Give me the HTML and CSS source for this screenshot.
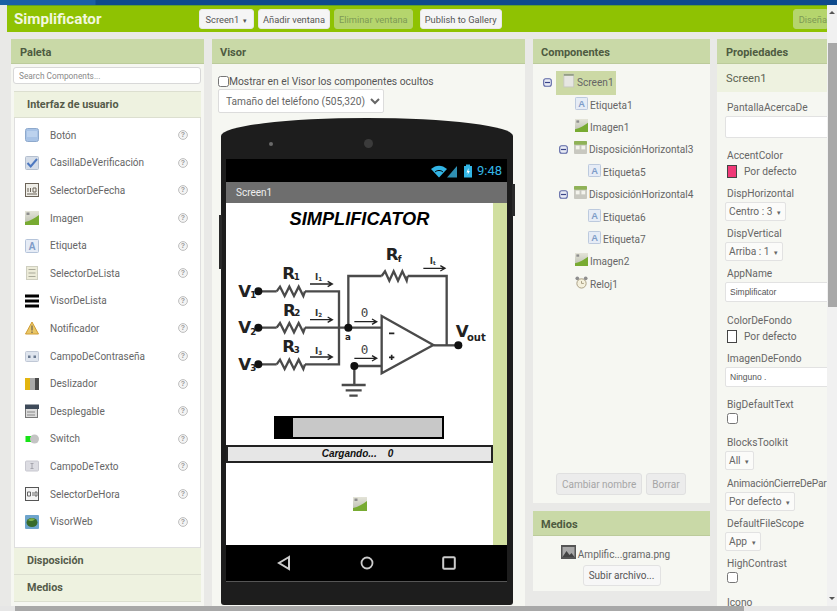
FILE: index.html
```html
<!DOCTYPE html>
<html lang="es">
<head>
    <meta charset="UTF-8">
    <title>Simplificator</title>
    <link rel="stylesheet" href="styles.css">
</head>
<body>
    <svg class="icon-defs" width="0" height="0">
        <defs>
            <linearGradient id="grass" x1="0" y1="0" x2="0" y2="1">
                <stop offset="0" stop-color="#e4e4d8"/>
                <stop offset="1" stop-color="#b9bdb0"/>
            </linearGradient>
            <symbol id="i-boton" viewBox="0 0 14 14"><rect x="0.5" y="0.5" width="13" height="13" rx="2" fill="#a8c3e6" stroke="#8ea9cc"/><rect x="2" y="3" width="10" height="6" fill="#bcd2ee"/></symbol>
            <symbol id="i-check" viewBox="0 0 14 14"><rect x="0.5" y="0.5" width="13" height="13" rx="1" fill="#d5dde8" stroke="#b4bfcf"/><path d="M2.5 7l3.2 3.5L12 3" fill="none" stroke="#4d78c0" stroke-width="2"/></symbol>
            <symbol id="i-fecha" viewBox="0 0 14 14"><rect x="0.5" y="0.5" width="13" height="13" fill="#efeee8" stroke="#6b6357"/><path d="M3 5v4M5.5 5v4M8 5h3v4H8zM2 11h10" fill="none" stroke="#6b6357"/></symbol>
            <symbol id="i-imagen" viewBox="0 0 14 14"><rect width="14" height="14" fill="url(#grass)"/><rect x="1.5" y="1.5" width="3" height="2.5" fill="#8d8d8d"/><path d="M0 11C5 10 10 7 14 4v10H0z" fill="#78ab32"/></symbol>
            <symbol id="i-etiqueta" viewBox="0 0 14 14"><rect x="0.5" y="0.5" width="13" height="13" rx="1" fill="#e6ecf6" stroke="#b5c4da"/><text x="7" y="11" text-anchor="middle" class="icon-letter">A</text></symbol>
            <symbol id="i-selector" viewBox="0 0 14 14"><rect x="1.5" y="0.5" width="11" height="13" fill="#ecebd8" stroke="#cfcfc0"/><path d="M3.500 3.500h7M3.500 7h7M3.500 10.500h7" stroke="#a9a999"/></symbol>
            <symbol id="i-lista" viewBox="0 0 14 14"><rect y="0.5" width="14" height="3" fill="#000"/><rect y="5.5" width="14" height="3" fill="#000"/><rect y="10.5" width="14" height="3" fill="#000"/></symbol>
            <symbol id="i-notif" viewBox="0 0 14 14"><path d="M7 1l6.500 12H.5z" fill="#e9c767" stroke="#d09c34"/><path d="M7 4.500v5M7 10.500v1.500" stroke="#8a7a55" stroke-width="1.600"/></symbol>
            <symbol id="i-pass" viewBox="0 0 14 14"><rect x="0.5" y="2.5" width="13" height="10" rx="1" fill="#dfe5ee" stroke="#c0c8d6"/><rect x="3" y="6.5" width="2.5" height="2.5" fill="#6b7a90"/><rect x="8.5" y="6.5" width="2.5" height="2.5" fill="#6b7a90"/></symbol>
            <symbol id="i-desliz" viewBox="0 0 14 14"><rect y="1" width="5" height="12" fill="#e3b510"/><rect x="5" y="1" width="5" height="12" fill="#aaa"/><rect x="10" y="1" width="4" height="12" fill="#4b4b4b"/></symbol>
            <symbol id="i-despl" viewBox="0 0 14 14"><rect x="0.5" y="4" width="12" height="9.5" fill="#dcdcdc" stroke="#777"/><rect y="0.5" width="14" height="4.5" fill="#3e4a59"/><path d="M2 8h8M2 11h8" stroke="#888"/></symbol>
            <symbol id="i-switch" viewBox="0 0 14 14"><rect x="0.5" y="4" width="8" height="6" fill="#17e317"/><circle cx="9.5" cy="7" r="4.5" fill="#c4c4c4"/></symbol>
            <symbol id="i-campo" viewBox="0 0 14 14"><rect x="0.5" y="2" width="13" height="10" rx="1" fill="#dcdce2" stroke="#c8c8d0"/><path d="M5.500 4.500h3M7 4.500v5M5.500 9.500h3" stroke="#a4a4ac"/></symbol>
            <symbol id="i-hora" viewBox="0 0 14 14"><rect x="0.5" y="0.5" width="13" height="13" fill="#f4f4f4" stroke="#555"/><path d="M2.500 5h3v4h-3zM8 5v4M10 5h2v4h-2z" fill="none" stroke="#666"/></symbol>
            <symbol id="i-web" viewBox="0 0 14 14"><rect width="14" height="14" rx="1" fill="#6ea4cc"/><ellipse cx="7" cy="7.5" rx="5.5" ry="4.5" fill="#386b2a"/><path d="M3 5c2-2 5-2 7-1-1 2-5 3-7 1z" fill="#7fb04a"/></symbol>
            <symbol id="i-layout" viewBox="0 0 14 14"><rect width="14" height="14" rx="1" fill="#c8c8c0"/><rect y="0" width="14" height="4" rx="1" fill="#8fb257"/><rect x="2" y="5" width="4" height="4" fill="#f3f3ec"/><rect x="8" y="5" width="4" height="4" fill="#f3f3ec"/></symbol>
            <symbol id="i-screen" viewBox="0 0 14 16"><rect x="1" y="0.5" width="11.5" height="15" fill="#e6e6e2" stroke="#c7c7c0"/><rect x="1" y="0.5" width="11.5" height="2" fill="#8f9a80"/></symbol>
            <symbol id="i-reloj" viewBox="0 0 14 14"><circle cx="7" cy="8" r="5" fill="#f4f0dc" stroke="#a59a7e"/><path d="M7 5.500V8h2.500" fill="none" stroke="#a59a7e"/><circle cx="2.5" cy="2.5" r="2" fill="#8e8e8e"/><circle cx="11.5" cy="2.5" r="2" fill="#8e8e8e"/></symbol>
            <symbol id="i-minus" viewBox="0 0 9 9"><rect x="0.7" y="0.7" width="7.6" height="7.6" rx="2" fill="#e8ebf5" stroke="#5a64a4" stroke-width="1.1"/><path d="M2 4.500h5" stroke="#3a4488" stroke-width="1.200"/></symbol>
            <symbol id="i-help" viewBox="0 0 10 10"><circle cx="5" cy="5" r="4.4" fill="#f4f4f4" stroke="#bdbdbd"/><text x="5" y="7.4" text-anchor="middle" class="icon-help">?</text></symbol>
        </defs>
    </svg>

    <div class="top-strip"></div>

    <div class="window">
        <div class="page">
            <header class="toolbar">
                <div class="app-title">Simplificator</div>
                <button class="btn btn-screen">Screen1 <span class="caret">▾</span></button>
                <button class="btn">Añadir ventana</button>
                <button class="btn btn-off">Eliminar ventana</button>
                <button class="btn btn-publish">Publish to Gallery</button>
                <button class="btn btn-off btn-design">Diseña</button>
            </header>

            <main class="workspace">
                <section class="panel palette">
                    <h2 class="panel-head">Paleta</h2>
                    <div class="search-wrap">
                        <input class="search" type="text" placeholder="Search Components...">
                    </div>
                    <h3 class="group-head group-first">Interfaz de usuario</h3>
                    <ul class="palette-list">
                        <li><svg class="pal-icon"><use href="#i-boton"/></svg><span>Botón</span><svg class="help"><use href="#i-help"/></svg></li>
                        <li><svg class="pal-icon"><use href="#i-check"/></svg><span>CasillaDeVerificación</span><svg class="help"><use href="#i-help"/></svg></li>
                        <li><svg class="pal-icon"><use href="#i-fecha"/></svg><span>SelectorDeFecha</span><svg class="help"><use href="#i-help"/></svg></li>
                        <li><svg class="pal-icon"><use href="#i-imagen"/></svg><span>Imagen</span><svg class="help"><use href="#i-help"/></svg></li>
                        <li><svg class="pal-icon"><use href="#i-etiqueta"/></svg><span>Etiqueta</span><svg class="help"><use href="#i-help"/></svg></li>
                        <li><svg class="pal-icon"><use href="#i-selector"/></svg><span>SelectorDeLista</span><svg class="help"><use href="#i-help"/></svg></li>
                        <li><svg class="pal-icon"><use href="#i-lista"/></svg><span>VisorDeLista</span><svg class="help"><use href="#i-help"/></svg></li>
                        <li><svg class="pal-icon"><use href="#i-notif"/></svg><span>Notificador</span><svg class="help"><use href="#i-help"/></svg></li>
                        <li><svg class="pal-icon"><use href="#i-pass"/></svg><span>CampoDeContraseña</span><svg class="help"><use href="#i-help"/></svg></li>
                        <li><svg class="pal-icon"><use href="#i-desliz"/></svg><span>Deslizador</span><svg class="help"><use href="#i-help"/></svg></li>
                        <li><svg class="pal-icon"><use href="#i-despl"/></svg><span>Desplegable</span><svg class="help"><use href="#i-help"/></svg></li>
                        <li><svg class="pal-icon"><use href="#i-switch"/></svg><span>Switch</span><svg class="help"><use href="#i-help"/></svg></li>
                        <li><svg class="pal-icon"><use href="#i-campo"/></svg><span>CampoDeTexto</span><svg class="help"><use href="#i-help"/></svg></li>
                        <li><svg class="pal-icon"><use href="#i-hora"/></svg><span>SelectorDeHora</span><svg class="help"><use href="#i-help"/></svg></li>
                        <li><svg class="pal-icon"><use href="#i-web"/></svg><span>VisorWeb</span><svg class="help"><use href="#i-help"/></svg></li>
                    </ul>
                    <h3 class="group-head">Disposición</h3>
                    <h3 class="group-head">Medios</h3>
                </section>

                <section class="panel viewer">
                    <h2 class="panel-head">Visor</h2>
                    <label class="hidden-toggle"><input type="checkbox">Mostrar en el Visor los componentes ocultos</label>
                    <select class="phone-size">
                        <option>Tamaño del teléfono (505,320)</option>
                    </select>

                    <div class="phone">
                        <span class="side-key side-left"></span>
                        <span class="side-key side-right"></span>
                        <div class="phone-top">
                            <span class="lens lens-small"></span>
                            <span class="lens lens-big"></span>
                        </div>
                        <div class="status-bar">
                            <svg class="status-icons" width="44" height="16" viewBox="0 0 44 16">
                                <path d="M1 6C6 1.500 12 1.500 17 6L9 14.500z" fill="#33b5e5"/>
                                <path d="M5 9C7 7 11 7 13 9" fill="none" stroke="#000" stroke-width="1"/>
                                <path d="M17 14.500L27 3v11.500z" fill="#2f8fb2"/>
                                <rect x="34" y="3" width="8" height="11.500" fill="#33b5e5"/>
                                <rect x="36" y="1.500" width="4" height="2" fill="#33b5e5"/>
                                <path d="M38.500 5l-2 4.500h1.600L37.500 12l2.400-4h-1.500z" fill="#fff"/>
                            </svg>
                            <span class="clock">9:48</span>
                        </div>
                        <div class="app-bar">Screen1</div>
                        <div class="screen">
                            <div class="screen-body">
                                <div class="screen-title">SIMPLIFICATOR</div>
                                <svg class="circuit" width="267" height="170" viewBox="3 81 801 510">
                                    <g class="wires">
                                        <path d="M100 259H155M240 259H342V478H240M155 478H100"/>
                                        <path d="M100 368H155M240 368H470"/>
                                        <path d="M370 368V213H470M548 213H665V421"/>
                                        <path d="M155 259l10 -14 14 28 14 -28 14 28 14 -28 14 28 5 -14"/>
                                        <path d="M155 368l10 -14 14 28 14 -28 14 28 14 -28 14 28 5 -14"/>
                                        <path d="M155 478l10 -14 14 28 14 -28 14 28 14 -28 14 28 5 -14"/>
                                        <path d="M470 213l10 -14 13 28 13 -28 13 28 13 -28 13 28 3 -14"/>
                                        <path d="M470 333L625 420L470 505Z"/>
                                        <path d="M625 421H700"/>
                                        <path d="M470 483H388V540"/>
                                        <path d="M350 540H422M362 556H410M373 572H398"/>
                                        <path d="M492 385H508M492 457H508M500 449V465" class="thin"/>
                                    </g>
                                    <g class="arrows">
                                        <path d="M255 237H318M308 229L322 237L308 245"/>
                                        <path d="M255 344H318M308 336L322 344L308 352"/>
                                        <path d="M255 456H318M308 448L322 456L308 464"/>
                                        <path d="M595 190H656M646 182L660 190L646 198"/>
                                        <path d="M388 350H451M441 342L455 350L441 358"/>
                                        <path d="M388 460H451M441 452L455 460L441 468"/>
                                    </g>
                                    <g class="nodes">
                                        <circle cx="100" cy="259" r="12"/>
                                        <circle cx="100" cy="368" r="12"/>
                                        <circle cx="100" cy="478" r="12"/>
                                        <circle cx="370" cy="368" r="12"/>
                                        <circle cx="388" cy="483" r="12"/>
                                        <circle cx="700" cy="421" r="12"/>
                                    </g>
                                    <g class="cir-big">
                                        <text x="40" y="275">V</text>
                                        <text x="40" y="384">V</text>
                                        <text x="40" y="494">V</text>
                                        <text x="172" y="222">R</text>
                                        <text x="174" y="332">R</text>
                                        <text x="172" y="441">R</text>
                                        <text x="482" y="165">R</text>
                                        <text x="692" y="395">V</text>
                                    </g>
                                    <g class="cir-sub">
                                        <text x="76" y="280">1</text>
                                        <text x="76" y="389">2</text>
                                        <text x="76" y="498">3</text>
                                        <text x="206" y="224">1</text>
                                        <text x="208" y="334">2</text>
                                        <text x="206" y="444">3</text>
                                        <text x="518" y="170">f</text>
                                        <text x="726" y="408" class="cir-out">out</text>
                                        <text x="360" y="406" class="cir-a">a</text>
                                    </g>
                                    <g class="cir-small">
                                        <text x="270" y="224">I<tspan class="cir-tiny" dy="3">1</tspan></text>
                                        <text x="270" y="334">I<tspan class="cir-tiny" dy="3">2</tspan></text>
                                        <text x="270" y="446">I<tspan class="cir-tiny" dy="3">3</tspan></text>
                                        <text x="614" y="178">I<tspan class="cir-tiny" dy="3">t</tspan></text>
                                    </g>
                                    <g class="cir-zero">
                                        <text x="407" y="336">0</text>
                                        <text x="407" y="446">0</text>
                                    </g>
                                </svg>
                                <div class="progress-wrap">
                                    <div class="progress"><div class="progress-fill"></div></div>
                                </div>
                                <div class="loading">Cargando...&nbsp;&nbsp;&nbsp;&nbsp;0</div>
                                <div class="broken-image"><svg width="14" height="14"><use href="#i-imagen"/></svg></div>
                            </div>
                            <div class="screen-strip"></div>
                        </div>
                        <div class="nav-bar">
                            <svg width="14" height="16" viewBox="0 0 14 16"><path d="M12 2L2 8l10 6z" fill="none" stroke="#ccc" stroke-width="2"/></svg>
                            <svg width="14" height="14" viewBox="0 0 14 14"><circle cx="7" cy="7" r="5.500" fill="none" stroke="#ccc" stroke-width="1.800"/></svg>
                            <svg width="14" height="14" viewBox="0 0 14 14"><rect x="1.200" y="1.200" width="11.600" height="11.600" rx="1" fill="none" stroke="#ccc" stroke-width="2"/></svg>
                        </div>
                        <div class="phone-chin"></div>
                    </div>
                </section>

                <div class="middle-col">
                    <section class="panel components">
                        <h2 class="panel-head">Componentes</h2>
                        <ul class="tree">
                            <li class="tree-row"><svg class="tree-minus"><use href="#i-minus"/></svg><span class="tree-selected"><svg class="screen-icon"><use href="#i-screen"/></svg>Screen1</span></li>
                            <li class="tree-row level-1"><svg class="tree-icon"><use href="#i-etiqueta"/></svg>Etiqueta1</li>
                            <li class="tree-row level-1"><svg class="tree-icon"><use href="#i-imagen"/></svg>Imagen1</li>
                            <li class="tree-row level-1b"><svg class="tree-minus"><use href="#i-minus"/></svg><svg class="tree-icon"><use href="#i-layout"/></svg>DisposiciónHorizontal3</li>
                            <li class="tree-row level-2"><svg class="tree-icon"><use href="#i-etiqueta"/></svg>Etiqueta5</li>
                            <li class="tree-row level-1b"><svg class="tree-minus"><use href="#i-minus"/></svg><svg class="tree-icon"><use href="#i-layout"/></svg>DisposiciónHorizontal4</li>
                            <li class="tree-row level-2"><svg class="tree-icon"><use href="#i-etiqueta"/></svg>Etiqueta6</li>
                            <li class="tree-row level-2"><svg class="tree-icon"><use href="#i-etiqueta"/></svg>Etiqueta7</li>
                            <li class="tree-row level-1"><svg class="tree-icon"><use href="#i-imagen"/></svg>Imagen2</li>
                            <li class="tree-row level-1"><svg class="tree-icon"><use href="#i-reloj"/></svg>Reloj1</li>
                        </ul>
                        <div class="component-actions">
                            <button class="btn-grey">Cambiar nombre</button>
                            <button class="btn-grey">Borrar</button>
                        </div>
                    </section>

                    <section class="panel media">
                        <h2 class="panel-head">Medios</h2>
                        <div class="media-file">
                            <svg width="15" height="14" viewBox="0 0 15 14"><rect width="15" height="14" fill="#555"/><rect x="1.500" y="2" width="12" height="10" fill="#a8a8a8"/><path d="M1.500 12l4-6 3 4 2-2 3 4z" fill="#444"/></svg>
                            <span>Amplific...grama.png</span>
                        </div>
                        <button class="btn btn-upload">Subir archivo...</button>
                    </section>
                </div>

                <section class="panel props">
                    <h2 class="panel-head">Propiedades</h2>
                    <div class="props-name">Screen1</div>
                    <div class="props-list">
                        <div class="prop prop-about"><div class="prop-label">PantallaAcercaDe</div><textarea class="prop-area"></textarea></div>
                        <div class="prop prop-color"><div class="prop-label">AccentColor</div><div class="color-row"><span class="swatch swatch-pink"></span>Por defecto</div></div>
                        <div class="prop"><div class="prop-label">DispHorizontal</div><button class="prop-select">Centro : 3 <span class="caret">▾</span></button></div>
                        <div class="prop"><div class="prop-label">DispVertical</div><button class="prop-select">Arriba : 1 <span class="caret">▾</span></button></div>
                        <div class="prop prop-app"><div class="prop-label">AppName</div><input class="prop-input" type="text" value="Simplificator"></div>
                        <div class="prop prop-color"><div class="prop-label">ColorDeFondo</div><div class="color-row"><span class="swatch swatch-white"></span>Por defecto</div></div>
                        <div class="prop prop-about"><div class="prop-label">ImagenDeFondo</div><input class="prop-input" type="text" value="Ninguno ."></div>
                        <div class="prop prop-check"><div class="prop-label">BigDefaultText</div><input type="checkbox"></div>
                        <div class="prop prop-toolkit"><div class="prop-label">BlocksToolkit</div><button class="prop-select">All <span class="caret">▾</span></button></div>
                        <div class="prop"><div class="prop-label prop-label-tight">AnimaciónCierreDePar</div><button class="prop-select">Por defecto <span class="caret">▾</span></button></div>
                        <div class="prop"><div class="prop-label">DefaultFileScope</div><button class="prop-select">App <span class="caret">▾</span></button></div>
                        <div class="prop prop-check prop-last"><div class="prop-label">HighContrast</div><input type="checkbox"></div>
                        <div class="prop"><div class="prop-label">Icono</div></div>
                    </div>
                </section>
            </main>
        </div>

        <div class="v-scroll">
            <span class="arrow-up"></span>
            <div class="v-thumb"></div>
            <span class="arrow-down"></span>
        </div>
    </div>

    <div class="h-scroll">
        <div class="h-thumb"></div>
    </div>
</body>
</html>
```

FILE: styles.css
```css
* {
    box-sizing: border-box;
}

html, body {
    height: 100%;
}

body {
    margin: 0;
    font-family: Roboto, "Liberation Sans", sans-serif;
    background: #e9e9e7;
    color: #666;
    display: flex;
    flex-direction: column;
    overflow: hidden;
}

.icon-defs {
    position: absolute;
}

.icon-letter {
    font: bold 10px "Liberation Sans", sans-serif;
    fill: #7f9cc8;
}

.icon-help {
    font: bold 7px "Liberation Sans", sans-serif;
    fill: #9a9a9a;
}

ul {
    list-style: none;
    margin: 0;
    padding: 0;
}

h2, h3 {
    margin: 0;
}

.top-strip {
    height: 5px;
    flex: none;
    background: linear-gradient(to right, #1a5fa5 0, #1a5fa5 95px, #0e4a8c 96px);
}

.window {
    flex: 1;
    display: flex;
    min-height: 0;
}

.page {
    flex: 1;
    min-width: 0;
    overflow: hidden;
    padding-left: 7px;
}

/* top green bar */
.toolbar {
    height: 27px;
    background: #8fc202;
    border-top: 1px solid #5fa02a;
    display: flex;
    align-items: center;
    padding-left: 7px;
    overflow: hidden;
}

.app-title {
    width: 185px;
    flex: none;
    font-size: 15.200px;
    font-weight: bold;
    color: #f2f7df;
}

.btn {
    height: 20px;
    padding: 0 4px;
    font: 9.300px Roboto, sans-serif;
    color: #555;
    background: #f5f5f5;
    border: 1px solid #e8e8e8;
    border-radius: 3px;
    margin-right: 4px;
    flex: none;
    white-space: nowrap;
}

.btn-screen {
    width: 55px;
}

.btn-off {
    background: #b5d56d;
    border-color: #b5d56d;
    color: #7d9a55;
}

.btn-publish {
    margin-left: 3px;
}

.btn-design {
    width: 34px;
    margin: 0 0 0 287px;
    padding: 0 0 0 5px;
    text-align: left;
    border-radius: 3px 0 0 3px;
}

.caret {
    font-size: 7px;
    margin-left: 2px;
}

/* columns */
.workspace {
    display: flex;
    gap: 8px;
    padding: 7px 0 0 4px;
    height: 574px;
}

.panel {
    background: #f6f7f2;
    flex: none;
}

.panel-head {
    height: 25px;
    line-height: 27px;
    padding-left: 9px;
    font-size: 11px;
    font-weight: bold;
    text-align: left;
    color: #4e5b41;
    background: #c9d9a7;
    border-bottom: 1px solid #bccb9b;
}

.viewer .panel-head, .middle-col .panel-head {
    padding-left: 8px;
}

/* palette */
.palette {
    width: 193px;
    overflow: hidden;
}

.search-wrap {
    padding: 3px 3px 0 2px;
}

.search {
    display: block;
    width: 100%;
    height: 17px;
    padding: 0 5px;
    font: 8.300px Roboto, sans-serif;
    border: 1px solid #d8d8d8;
    border-radius: 3px;
    background: #fff;
}

.search::placeholder {
    color: #8a8a8a;
}

.group-head {
    height: 27px;
    line-height: 26px;
    margin: 0 3px 0 3px;
    padding-left: 13px;
    font-size: 10.800px;
    font-weight: bold;
    color: #555b4a;
    background: #eef2e0;
    border-bottom: 1px solid #dcdfd0;
}

.group-first {
    margin-top: 7px;
    border-top: 1px solid #dcdfd0;
}

.palette-list {
    margin: 0 3px;
    padding: 3.500px 0 11px;
    height: 430px;
    background: #fff;
    border: 1px solid #dfdfdf;
    border-width: 0 1px 1px;
}

.palette-list li {
    height: 27.600px;
    display: flex;
    align-items: center;
    padding-left: 10px;
    font-size: 10px;
    color: #666;
}

.palette-list span {
    flex: 1;
    padding-left: 11px;
}

.pal-icon {
    width: 14px;
    height: 14px;
    flex: none;
}

.help {
    width: 10px;
    height: 10px;
    flex: none;
    margin-right: 12px;
}

/* viewer */
.viewer {
    width: 313px;
    overflow: hidden;
}

.hidden-toggle {
    display: flex;
    align-items: center;
    height: 14px;
    margin: 10px 0 0 6px;
    font-size: 10.300px;
    color: #555;
}

.hidden-toggle input {
    width: 11px;
    height: 11px;
    margin: 0;
}

.phone-size {
    display: block;
    width: 166px;
    height: 24px;
    margin: 1px 0 0 6px;
    padding-left: 3px;
    font: 10.200px Roboto, sans-serif;
    color: #666;
    background: #fff;
    border: 1px solid #dcdcdc;
    border-radius: 2px;
}

.phone {
    position: relative;
    width: 292px;
    height: 487px;
    margin: 5px 0 0 9px;
    padding: 0 6px 0 5px;
    background: #1d1d1d;
    border-radius: 50% 50% 3px 3px / 18px 18px 3px 3px;
}

.side-key {
    position: absolute;
    width: 3px;
    background: #2a2a2a;
}

.side-left {
    left: -2px;
    top: 97px;
    height: 54px;
}

.side-right {
    right: -2px;
    top: 66px;
    height: 32px;
}

.phone-top {
    height: 41px;
    display: flex;
    align-items: center;
    gap: 91px;
    padding: 10px 0 0 43px;
}

.lens {
    border-radius: 50%;
    background: #555;
}

.lens-small {
    width: 4px;
    height: 4px;
    background: #6a6a6a;
}

.lens-big {
    width: 9px;
    height: 9px;
    background: #3b3b3b;
}

.status-bar {
    height: 23px;
    background: #000;
    display: flex;
    align-items: center;
    justify-content: flex-end;
    gap: 3px;
    padding-right: 5px;
}

.status-icons {
    margin-top: 1px;
}

.clock {
    font-size: 13px;
    color: #33b5e5;
}

.app-bar {
    height: 21px;
    line-height: 21px;
    padding-left: 10px;
    font-size: 10px;
    color: #eee;
    background: #6e6e6e;
}

.screen {
    display: flex;
    height: 342px;
    background: #fff;
}

.screen-body {
    width: 267px;
}

.screen-strip {
    width: 14px;
    background: #d1dfa0;
}

.screen-title {
    height: 29px;
    text-align: center;
    font: italic bold 18.200px/32px "Liberation Sans", sans-serif;
    color: #000;
}

.circuit {
    display: block;
}

.wires path {
    fill: none;
    stroke: #4a4a4a;
    stroke-width: 7;
}

.wires .thin {
    stroke: #222;
    stroke-width: 5;
}

.arrows path {
    fill: none;
    stroke: #222;
    stroke-width: 4;
}

.nodes circle {
    fill: #111;
}

.cir-big text {
    font: bold 50px "DejaVu Sans", sans-serif;
    fill: #222;
}

.cir-sub text {
    font: bold 26px "DejaVu Sans", sans-serif;
    fill: #222;
}

.cir-sub .cir-out {
    font-size: 30px;
}

.cir-small text {
    font: bold 26px "DejaVu Sans", sans-serif;
    fill: #333;
}

.cir-small .cir-tiny {
    font-size: 17px;
}

.cir-zero text {
    font: 38px "DejaVu Sans Mono", monospace;
    fill: #444;
}

.progress-wrap {
    padding: 14px 0 0 48px;
}

.progress {
    width: 170px;
    height: 23px;
    border: 2px solid #000;
    background: #c8c8c8;
}

.progress-fill {
    width: 17px;
    height: 100%;
    background: #000;
}

.loading {
    height: 18px;
    margin-top: 6px;
    padding-right: 4px;
    text-align: center;
    font: italic bold 10px/13px "Liberation Sans", sans-serif;
    color: #111;
    background: #e6e6e6;
    border: 2px solid #222;
}

.broken-image {
    padding: 33px 0 0 127px;
}

.nav-bar {
    height: 37px;
    background: #000;
    border-bottom: 1px solid #555;
    display: flex;
    align-items: center;
    justify-content: space-between;
    padding: 0 51px;
}

.phone-chin {
    height: 23px;
}

/* components */
.middle-col {
    width: 177px;
    flex: none;
    margin-right: -1px;
}

.components {
    height: 464px;
    display: flex;
    flex-direction: column;
}

.tree {
    flex: 1;
    padding: 7.500px 0 0 10px;
    font-size: 10.100px;
    color: #666;
}

.tree-row {
    height: 22.400px;
    display: flex;
    align-items: center;
}

.tree-minus {
    width: 9px;
    height: 9px;
    flex: none;
}

.tree-selected {
    height: 24px;
    width: 60px;
    margin-left: 4px;
    display: flex;
    align-items: center;
    background: #ccd9a5;
    padding-left: 7px;
    gap: 2px;
}

.screen-icon {
    width: 12px;
    height: 15px;
    margin-top: -5px;
}

.tree-icon {
    width: 13px;
    height: 13px;
    margin: -4px 2px 0 0;
    flex: none;
}

.level-1 {
    padding-left: 32px;
}

.level-1b {
    padding-left: 16px;
}

.level-1b .tree-icon {
    margin-left: 6px;
}

.level-2 {
    padding-left: 45px;
}

.component-actions {
    display: flex;
    gap: 4px;
    padding: 0 0 8px 23px;
}

.btn-grey {
    height: 22px;
    padding: 0 5px;
    font: 10px Roboto, sans-serif;
    color: #a6a6a6;
    background: #ececec;
    border: 1px solid #e0e0e0;
    border-radius: 3px;
}

.media {
    margin-top: 8px;
    height: 80px;
    text-align: center;
}

.media-file {
    display: flex;
    align-items: center;
    justify-content: center;
    gap: 2px;
    padding: 8px 12px 0 0;
    font-size: 10px;
    color: #666;
}

.media-file span {
    padding-top: 5px;
}

.btn-upload {
    width: 78px;
    height: 21px;
    margin: 5px 0 0;
    font-size: 10px;
    background: #f7f7f7;
    border-color: #e2e2e2;
}

/* properties */
.props {
    width: 110px;
    overflow: hidden;
}

.props-name {
    height: 28px;
    line-height: 29px;
    padding-left: 9px;
    font-size: 11.200px;
    color: #5c6352;
    background: #eef2e0;
}

.props-list {
    padding: 10px 0 0 8px;
    width: 140px;
}

.prop {
    margin-bottom: 7px;
}

.prop-label {
    height: 12px;
    line-height: 12px;
    margin: 0 0 2px 2px;
    font-size: 10.200px;
    width: 100px;
    white-space: nowrap;
    overflow: hidden;
    color: #666;
}

.prop-label-tight {
    letter-spacing: -0.150px;
}

.prop-area {
    display: block;
    width: 130px;
    height: 22px;
    margin: 0;
    border: 1px solid #e2e2e2;
    border-radius: 2px;
    background: #fff;
    resize: none;
}

.prop-about {
    margin-bottom: 12px;
}

.prop-color {
    margin-bottom: 10px;
}

.prop-app {
    margin-bottom: 13px;
}

.prop-toolkit {
    margin-bottom: 8px;
}

.color-row {
    display: flex;
    align-items: center;
    gap: 7px;
    height: 14px;
    margin-left: 2px;
    font-size: 10.200px;
    color: #666;
}

.swatch {
    width: 10px;
    height: 13px;
    border: 1px solid #444;
}

.swatch-pink {
    background: #f03a78;
}

.swatch-white {
    background: #fff;
}

.prop-select {
    display: block;
    height: 19px;
    padding: 0 4px 0 3px;
    font: 10.200px Roboto, sans-serif;
    color: #666;
    background: #fbfbf9;
    border: 1px solid #e2e2e2;
    border-radius: 2px;
}

.prop-input {
    display: block;
    width: 130px;
    height: 20px;
    padding: 0 4px;
    font: 8.500px "Liberation Sans", sans-serif;
    color: #555;
    background: #fff;
    border: 1px solid #e2e2e2;
    border-radius: 2px;
}

.prop-check {
    margin-bottom: 13px;
}

.prop-last {
    margin-bottom: 14px;
}

.prop-check input {
    display: block;
    width: 11px;
    height: 11px;
    margin: 2px 0 0 2px;
}

/* browser scrollbars */
.v-scroll {
    width: 10px;
    flex: none;
    position: relative;
    background: #f1f1f1;
}

.v-thumb {
    position: absolute;
    top: 38px;
    left: 1px;
    width: 9px;
    height: 264px;
    background: #a8a8a8;
}

.arrow-up, .arrow-down {
    position: absolute;
    left: 2px;
    border-left: 3px solid transparent;
    border-right: 3px solid transparent;
}

.arrow-up {
    top: 6px;
    border-bottom: 3px solid #555;
}

.arrow-down {
    bottom: 6px;
    border-top: 3px solid #555;
}

.h-scroll {
    height: 5px;
    flex: none;
    background: #e6e6e6;
    padding-left: 15px;
}

.h-thumb {
    width: 729px;
    height: 100%;
    background: #a8a8a8;
}
```
